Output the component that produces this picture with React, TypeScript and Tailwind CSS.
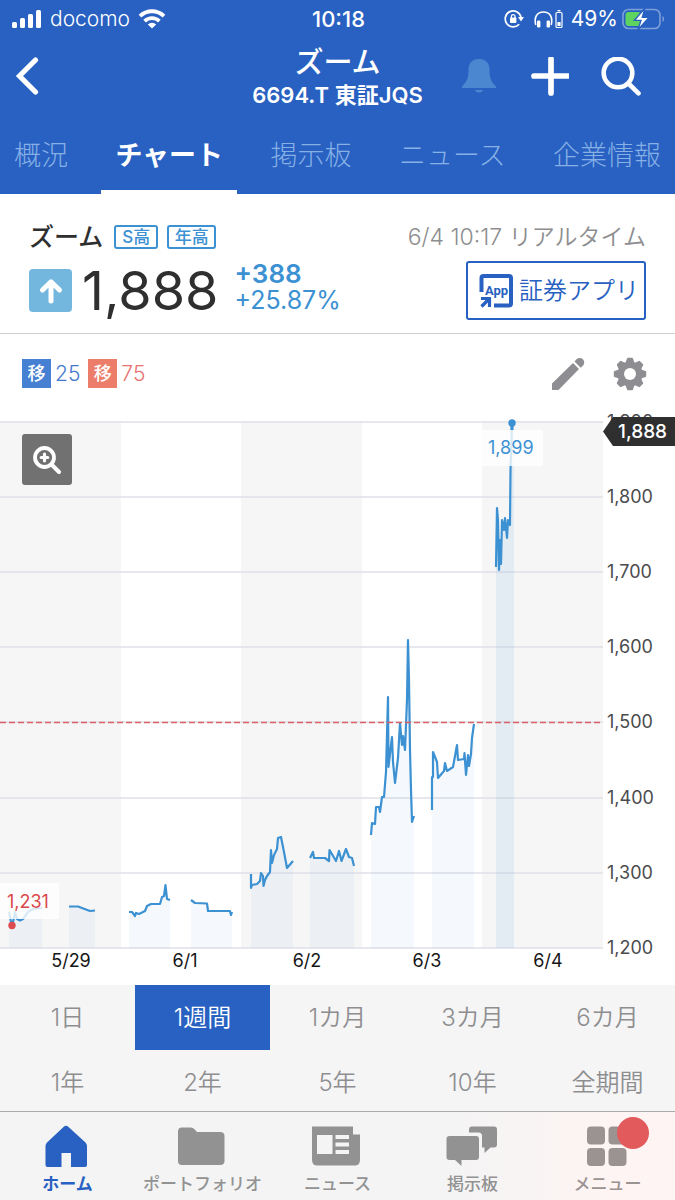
import React from "react";

const FONT = "font-['Inter','Noto_Sans_CJK_JP',sans-serif]";

function StatusBar() {
  return (
    <div className="grid h-[37px] grid-cols-[1fr_auto_1fr] items-center pr-2.5 pl-3 text-[21px] leading-none text-white">
      <div className="flex items-center gap-2">
        <svg className="h-5 w-[30px]" viewBox="0 0 30 20" fill="currentColor" aria-hidden="true">
          <rect x="0" y="13" width="5" height="6" rx="1.5" />
          <rect x="8" y="9" width="5" height="10" rx="1.5" />
          <rect x="16" y="5" width="5" height="14" rx="1.5" />
          <rect x="24" y="1" width="5" height="18" rx="1.5" />
        </svg>
        <span className="font-[350]">docomo</span>
        <svg className="h-5 w-[28px]" viewBox="0 0 28 20" fill="none" stroke="currentColor" strokeWidth="3.8" aria-hidden="true">
          <path d="M2 7.2A17 17 0 0 1 26 7.2" />
          <path d="M6.6 12.200A10.6 10.6 0 0 1 21.4 12.200" />
          <path d="M9.8 15.4A6 6 0 0 1 18.2 15.4L14 19.5Z" fill="currentColor" stroke="none" />
        </svg>
      </div>
      <span className="text-[22px] font-medium">10:18</span>
      <div className="flex items-center justify-end">
        <svg className="mr-2.5 h-5 w-5" viewBox="0 0 20 20" fill="none" stroke="currentColor" strokeWidth="1.7" aria-hidden="true">
          <path d="M15.2 15.2A8 8 0 1 1 17 8" />
          <path d="M14 8h6l-3 4.5z" fill="currentColor" stroke="none" />
          <rect x="6" y="8.5" width="6.4" height="5.5" rx="1" fill="currentColor" stroke="none" />
          <path d="M7.4 9V7.4a1.8 1.8 0 0 1 3.6 0V9" strokeWidth="1.3" />
        </svg>
        <svg className="mr-2 h-5 w-[29px]" viewBox="0 0 29 20" fill="none" stroke="currentColor" strokeWidth="1.6" aria-hidden="true">
          <path d="M1.8 16C-.2 8 3 3 9.5 3S19 8 17.2 16" />
          <rect x="3" y="11.5" width="3.4" height="7" rx="1.2" fill="currentColor" stroke="none" />
          <rect x="12.6" y="11.5" width="3.4" height="7" rx="1.2" fill="currentColor" stroke="none" />
          <rect x="22" y="3.5" width="6" height="15" rx="1" strokeWidth="1.2" />
          <path d="M23.5 1.7h3" strokeWidth="1.4" />
          <rect x="23.4" y="13" width="3.2" height="4" fill="currentColor" stroke="none" />
        </svg>
        <span className="mr-1">49%</span>
        <svg className="h-[22px] w-[43px]" viewBox="0 0 43 22" fill="none" aria-hidden="true">
          <rect x="1" y="1.5" width="37" height="19" rx="5.5" stroke="#7f9fd9" strokeWidth="1.6" />
          <path d="M40.5 8v6c2-.6 2-5.400 0-6z" fill="#7f9fd9" />
          <rect x="3.500" y="4" width="15.500" height="14" rx="3" fill="#5fd35f" />
          <path d="M23 0 12.500 12.400h6.500L15.800 22 27 9.400h-6.700z" fill="#fff" stroke="#2861c1" strokeWidth="1.400" />
        </svg>
      </div>
    </div>
  );
}

function NavBar() {
  return (
    <div className="grid h-[79px] grid-cols-[1fr_auto_1fr] items-center pr-[34px] pl-3 text-white">
      <button type="button" aria-label="戻る" className="w-8">
        <svg className="h-10 w-8" viewBox="0 0 32 40" fill="none" stroke="currentColor" strokeWidth="5.200" strokeLinecap="round" strokeLinejoin="miter">
          <path d="M23.500 3 7.500 19l16 16" />
        </svg>
      </button>
      <div className="pt-1 pl-[22px] text-center">
        <h1 className="text-[29px] leading-8 font-medium">ズーム</h1>
        <p className="text-[22px] leading-8 font-semibold">6694.T 東証JQS</p>
      </div>
      <div className="flex items-center justify-end gap-8">
        <button type="button" aria-label="通知">
          <svg className="h-9 w-9" viewBox="0 0 36 36" fill="#4a87d0">
            <path d="M18 0c7 0 10.500 4.500 10.500 10.500 0 8 1 11.500 6.500 17v1.500H1v-1.500C6.500 22 7.500 18.500 7.500 10.500 7.500 4.500 11 0 18 0z" />
            <path d="M14 31h8c-.5 3.300-7.500 3.300-8 0z" />
          </svg>
        </button>
        <button type="button" aria-label="追加">
          <svg className="h-10 w-10" viewBox="0 0 40 40" fill="none" stroke="currentColor" strokeWidth="5.700" strokeLinecap="round">
            <path d="M22 2v34M5 19h34" />
          </svg>
        </button>
        <button type="button" aria-label="検索">
          <svg className="h-10 w-10" viewBox="0 0 40 40" fill="none" stroke="currentColor" strokeWidth="4.600" strokeLinecap="round">
            <circle cx="17" cy="16" r="14.300" />
            <path d="m27.500 26.500 10 9.800" />
          </svg>
        </button>
      </div>
    </div>
  );
}

function Tabs() {
  const tabs = ["概況", "チャート", "掲示板", "ニュース", "企業情報"];
  return (
    <nav className="flex h-[78px] justify-between">
      {tabs.map((t) => (
        <a
          key={t}
          href="#"
          className={
            t === "チャート"
              ? "border-b-4 border-white px-3.5 text-[27px] leading-[80px] font-bold text-white"
              : "px-3.5 text-[27px] leading-[80px] font-light text-[#86b0e6]"
          }
        >
          {t}
        </a>
      ))}
    </nav>
  );
}

function Quote() {
  return (
    <section className="border-b border-[#cfcfd1] px-[29px] pt-[27px] pb-[13px]">
      <div className="flex h-8 items-center">
        <h2 className="mr-[11px] text-[25px] leading-8 font-medium text-[#2f2f2f]">ズーム</h2>
        <span className="mr-[9px] flex h-6 w-11 items-center justify-center rounded-[3px] border-2 border-[#3c91d2] pt-px text-[17px] font-medium text-[#3c91d2]">S高</span>
        <span className="flex h-6 w-[49px] items-center justify-center rounded-[3px] border-2 border-[#3c91d2] pt-px text-[17px] font-medium text-[#3c91d2]">年高</span>
        <span className="ml-auto text-[23px] leading-8 font-[350] text-[#8e8e90]">6/4 10:17 リアルタイム</span>
      </div>
      <div className="mt-2 flex items-center">
        <span className="flex h-[43px] w-[43px] items-center justify-center rounded-sm bg-[#73b7df]">
          <svg className="h-7 w-7" viewBox="0 0 28 28" fill="none" stroke="#fff" strokeWidth="5" strokeLinecap="round" strokeLinejoin="round" aria-hidden="true">
            <path d="M14 24V5M5.500 13 14 4.800 22.500 13" />
          </svg>
        </span>
        <span className="ml-2.5 text-[54px] leading-[59px] text-[#2f2f2f]">1,888</span>
        <div className="ml-4 self-start text-[#3c91d2]">
          <p className="text-[26px] leading-[26px] font-semibold">+388</p>
          <p className="text-[25px] leading-[27px]">+25.87%</p>
        </div>
        <button type="button" className="ml-auto flex h-[59px] w-[180px] items-center gap-1.5 rounded-[3px] border-2 border-[#2861c1] pl-2.5 text-[#2861c1]">
          <svg className="h-[35px] w-[35px] shrink-0" viewBox="0 0 35 35" fill="none" stroke="currentColor" strokeWidth="4" aria-hidden="true">
            <path d="M3.500 19V5Q3.500 3 5.500 3H31Q33 3 33 5V30.500Q33 32.500 31 32.500H16" />
            <path d="M3 25.500h8.500V34M10.500 26.500 3.500 33.500" strokeWidth="3.200" />
            <text x="18.500" y="22" textAnchor="middle" className="fill-current stroke-none font-['Roboto','Inter'] text-[13px] font-bold">App</text>
          </svg>
          <span className="text-[24px] leading-8 font-[350] whitespace-nowrap">証券アプリ</span>
        </button>
      </div>
    </section>
  );
}

function ChartTools() {
  return (
    <section className="flex h-[87px] items-center pr-7 pb-2 pl-[22px] text-[21px] font-[350]">
      <span className="flex h-[29px] w-[29px] items-center justify-center bg-[#4580d2] text-[18px] font-medium text-white">移</span>
      <span className="ml-1 text-[#4378cc]">25</span>
      <span className="ml-2 flex h-[29px] w-[29px] items-center justify-center bg-[#ec7d6b] text-[18px] font-medium text-white">移</span>
      <span className="ml-1 text-[#e87270]">75</span>
      <button type="button" aria-label="描画" className="ml-auto">
        <svg className="h-[34px] w-[34px]" viewBox="0 0 34 34" fill="#8e8e92">
          <path d="M1 33v-6.500L22 6l6 6L7.500 33z" />
          <path d="m23.500 4.500 2-2.200a4.500 4.500 0 0 1 6.400 6.400L29.700 10.700z" />
        </svg>
      </button>
      <button type="button" aria-label="設定" className="ml-7">
        <svg className="h-[34px] w-[34px]" viewBox="0 0 34 34" fill="#8e8e92">
          <mask id="gear-hole" maskUnits="userSpaceOnUse" x="-5" y="-5" width="44" height="44">
            <rect x="-5" y="-5" width="44" height="44" fill="#fff" />
            <circle cx="17" cy="17" r="6" fill="#000" />
          </mask>
          <g mask="url(#gear-hole)">
            {[0, 45, 90, 135].map((a) => (
              <path key={a} d="M14 1.500Q14.200.8 15 .8h4q.8 0 1 .7L21.500 6v22L20 32.500q-.2.700-1 .7h-4q-.8 0-1-.7L12.500 28V6z" transform={`rotate(${a} 17 17)`} />
            ))}
            <circle cx="17" cy="17" r="12.500" />
          </g>
        </svg>
      </button>
    </section>
  );
}

type Point = [number, number];

// Intraday sessions, morning and afternoon of each trading day.
const sessions: Point[][] = [
  [[9, 912], [11, 922], [13, 922], [15, 912], [17, 919], [20, 920.5], [23, 919], [28, 912], [33, 909], [42, 908]],
  [[69, 906.5], [78, 906.5], [90, 911], [95, 910.5]],
  [[129, 912], [132, 912], [135, 916], [136, 913], [139, 914], [145, 911], [147, 906], [151, 904], [160, 904], [162, 897], [164, 896], [165.5, 885], [167, 899], [170, 900]],
  [[191, 900], [195, 903], [207, 903.5], [208, 911], [230, 911], [231, 915], [232, 912]],
  [[251, 874], [251, 888], [252, 885], [257, 884], [260, 881], [261, 873], [263, 876], [263.5, 886], [265, 880], [267, 876], [270, 872], [271, 850], [272, 863], [274, 855], [277, 849], [278, 838], [281, 837], [284, 852], [287, 868], [293, 861]],
  [[310, 858], [313, 852], [314, 858], [325, 858], [329, 861], [329.5, 850], [336, 861], [339, 851], [341.500, 861], [346, 849], [349, 857], [352, 858], [354, 866]],
  [[371, 835], [372, 823], [375, 824], [376, 807], [379, 807], [380, 812], [382, 797], [384, 797], [386, 772], [388, 697], [388.5, 767], [391, 745], [392, 737], [393, 762], [395, 783], [398, 758], [400, 723], [402, 745], [403, 736], [405, 750], [407, 700], [408, 640], [409, 680], [410, 750], [411, 790], [412, 822], [414, 816]],
  [[432, 810], [432, 777], [433, 777], [433, 752], [435, 757], [437, 762], [438, 778], [444, 771], [445, 763], [447, 771], [453, 767], [457, 745], [458, 760], [464, 759], [464.500, 753], [466, 775], [468, 755], [469, 766], [471, 754], [472, 738], [474, 724]],
  [[496, 567], [497, 508], [498, 520], [499, 570], [500, 540], [501, 564], [502, 520], [504, 530], [505, 518], [507, 538], [508, 520], [510, 525], [510.5, 470], [512, 423], [514, 423]],
];

const priceTicks = ["1,900", "1,800", "1,700", "1,600", "1,500", "1,400", "1,300", "1,200"];
const dayTicks: [string, number][] = [["5/29", 71], ["6/1", 185], ["6/2", 307], ["6/3", 427], ["6/4", 548]];
const tickY = (i: number) => Math.round(421.5 + i * 75.2);

function Chart() {
  return (
    <section className="relative">
      <svg className={`block h-auto w-full ${FONT}`} viewBox="0 421 675 564" overflow="visible" role="img" aria-label="株価チャート">
        {[0, 241, 482].map((x) => (
          <rect key={x} x={x} y="421" width="121" height="527" fill="#f6f6f7" />
        ))}
        {priceTicks.map((p, i) => (
          <g key={p}>
            <path d={`M0 ${tickY(i)}H603`} stroke="#dfe1e7" strokeWidth="1.500" />
            <text x="607" y={tickY(i) + 6} className="fill-[#4b4b4d] text-[18px]">{p}</text>
          </g>
        ))}
        {sessions.map((s, i) => {
          const line = s.map((p) => p.join(" ")).join("L");
          const last = s[s.length - 1][0];
          return (
            <g key={i}>
              <path d={`M${line}V948H${s[0][0]}Z`} fill="#3c91d2" fillOpacity={i === 8 ? 0.09 : 0.05} />
              <path d={`M${i === 8 ? line.replace(`L${last} 423`, "") : line}`} fill="none" stroke="#3c91d2" strokeWidth="2.200" strokeLinejoin="round" />
            </g>
          );
        })}
        <path d="M0 722.500H603" stroke="#da6067" strokeWidth="1.500" strokeDasharray="6 3" />
        <rect x="0" y="883" width="59" height="36" fill="#fff" fillOpacity=".8" />
        <text x="7" y="908" className="fill-[#d9484c] text-[18px]">1,231</text>
        <circle cx="12" cy="925.500" r="3.700" fill="#dc4b4f" />
        <rect x="482" y="430" width="61" height="36" fill="#fff" fillOpacity=".8" />
        <text x="488" y="454" className="fill-[#3c91d2] text-[18px]">1,899</text>
        <path d="M512 423V430" stroke="#3c91d2" strokeWidth="3" />
        <circle cx="512" cy="423" r="3.700" fill="#3c91d2" />
        <path d="M603 431.500 613 417H675V446H613Z" fill="#2f2f30" />
        <text x="618" y="438" className="fill-white text-[19px] font-medium">1,888</text>
        {dayTicks.map(([d, x]) => (
          <text key={d} x={x} y="967" textAnchor="middle" className="fill-[#161616] text-[18px]">{d}</text>
        ))}
      </svg>
      <button type="button" aria-label="拡大" className="absolute top-[13px] left-[22px] flex h-[51px] w-[50px] items-center justify-center rounded-[3px] bg-[#717171]">
        <svg className="h-7 w-7" viewBox="0 0 28 28" fill="none" stroke="#fff" strokeLinecap="round" aria-hidden="true">
          <circle cx="11.500" cy="11.500" r="9.500" strokeWidth="3.800" />
          <path d="m19 19 7 7" strokeWidth="4" />
          <path d="M11.500 8.200v6.600M8.200 11.500h6.600" strokeWidth="3.200" />
        </svg>
      </button>
    </section>
  );
}

function RangePicker() {
  const ranges = ["1日", "1週間", "1カ月", "3カ月", "6カ月", "1年", "2年", "5年", "10年", "全期間"];
  return (
    <section className="grid grid-cols-5 bg-[#f5f5f6] pb-px">
      {ranges.map((r, i) => (
        <button
          key={r}
          type="button"
          className={
            i === 1
              ? "h-[65px] bg-[#2861c1] text-[24px] font-[350] text-white"
              : i < 5
                ? "h-[65px] text-[24px] font-[350] text-[#8e8e90]"
                : "h-[60px] pt-1.5 text-[24px] font-[350] text-[#8e8e90]"
          }
        >
          {r}
        </button>
      ))}
    </section>
  );
}

function TabBar() {
  const items = [
    {
      label: "ホーム",
      icon: <path d="M21.500 3Q24 .7 26.500 3L43.500 18.500Q45 20 45 22V41Q45 43 43 43H29V29H19.500V43H5.500Q3.500 43 3.500 41V22Q3.500 20 5 18.500Z" />,
    },
    {
      label: "ポートフォリオ",
      icon: <path d="M1 7.500Q1 3.500 5 3.500H14Q16 3.500 17.500 5.200L20 8H43Q47.500 8 47.500 12V37Q47.500 41 43 41H5Q1 41 1 37Z" />,
    },
    {
      label: "ニュース",
      icon: (
        <path fillRule="evenodd" d="M0 2.500H41V10.500H48V36Q48 41.500 42.500 41.500H5.500Q0 41.500 0 36ZM5 11V30H20.500V11ZM23.500 11V15H37V11ZM23.500 18.500V22.500H37V18.500ZM23.500 26V30H37V26Z" />
      ),
    },
    {
      label: "掲示板",
      icon: (
        <g>
          <path d="M2.500 12H29Q32 12 32 15V33Q32 36 29 36H14.500V42L8 36H2.500Q-.5 36-.5 33V15Q-.5 12 2.500 12Z" />
          <path d="M22 5.500Q22 2.500 25 2.500H47Q50 2.500 50 5.500V20.500Q50 23.500 47 23.500H43.500L37.500 29V23.500H35V12Q35 8.500 31.500 8.500H22Z" />
        </g>
      ),
    },
    {
      label: "メニュー",
      icon: (
        <g>
          <rect x="5" y="2.500" width="18" height="18" rx="4" />
          <rect x="26.500" y="2.500" width="18" height="18" rx="4" />
          <rect x="5" y="24" width="18" height="18" rx="4" />
          <rect x="26.500" y="24" width="18" height="18" rx="4" />
        </g>
      ),
    },
  ];
  return (
    <nav className="grid grid-cols-5 border-t border-[#aaaaac] bg-linear-to-r from-[#f4f4f5] from-65% to-[#fdf4f3] to-90%">
      {items.map((it, i) => (
        <a
          key={it.label}
          href="#"
          className={
            i === 0
              ? "flex h-[88px] flex-col items-center pt-3 text-[#2861c1]"
              : i === 4
                ? "flex h-[88px] flex-col items-center pt-3 text-[#9b9292]"
                : "flex h-[88px] flex-col items-center pt-3 text-[#929292]"
          }
        >
          <span className="relative">
            <svg className="h-11 w-12 overflow-visible" viewBox="2 0 48 44" fill="currentColor" aria-hidden="true">
              {it.icon}
            </svg>
            {i === 4 && <span className="absolute -top-[7px] -right-[17px] h-8 w-8 rounded-full bg-[#e25a5b]" />}
          </span>
          <span className={i === 0 ? "mt-1 text-[17px] leading-6 font-bold whitespace-nowrap" : "mt-1 text-[17px] leading-6 font-medium whitespace-nowrap"}>{it.label}</span>
        </a>
      ))}
    </nav>
  );
}

export default function App() {
  return (
    <main className={`min-h-screen bg-white ${FONT}`}>
      <header className="bg-[#2861c1]">
        <StatusBar />
        <NavBar />
        <Tabs />
      </header>
      <Quote />
      <ChartTools />
      <Chart />
      <RangePicker />
      <TabBar />
    </main>
  );
}
